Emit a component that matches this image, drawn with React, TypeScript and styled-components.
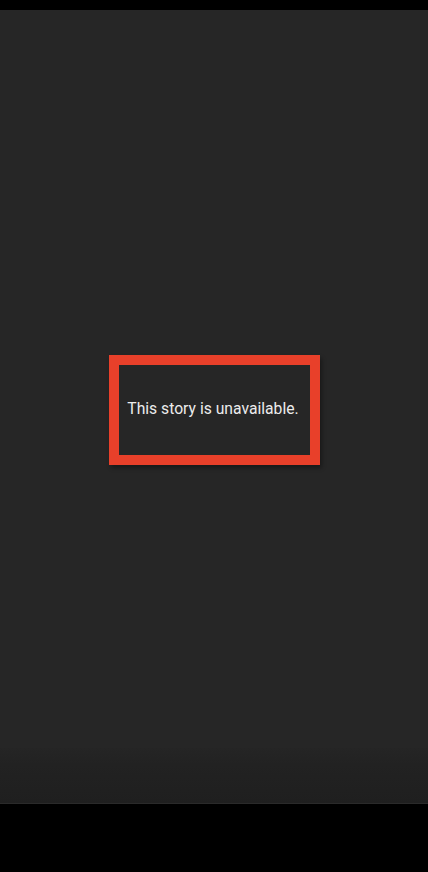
import React from "react";
import styled, { createGlobalStyle } from "styled-components";

const Global = createGlobalStyle`
  html, body { margin: 0; padding: 0; background: #000; }
  body { font-family: Roboto, "Noto Sans", sans-serif; }
`;

const Screen = styled.div`
  width: 428px;
  height: 872px;
  display: flex;
  flex-direction: column;
  background: #000;
`;

const StatusBar = styled.div`
  height: 10px;
  flex: none;
  background: #000;
`;

const Stage = styled.main`
  flex: 1;
  display: flex;
  flex-direction: column;
  background: #262626;
`;

const Center = styled.div`
  flex: 1;
  display: flex;
  align-items: center;
  justify-content: center;
  padding-top: 62px;
`;

const Shade = styled.div`
  height: 55px;
  flex: none;
  background: linear-gradient(to bottom, #252525 0%, #222 30%, #1f1f1f 100%);
  border-bottom: 1px solid #2a2a2a;
`;

const NavArea = styled.div`
  height: 68px;
  flex: none;
  background: #000;
`;

const Notice = styled.div`
  box-sizing: border-box;
  width: 211px;
  height: 110px;
  border: 10px solid #e8402a;
  display: flex;
  align-items: center;
  justify-content: center;
  box-shadow: 2px 3px 4px rgba(0, 0, 0, 0.35);
`;

const Message = styled.p`
  margin: 0;
  color: #ececec;
  font-size: 15.7px;
  font-family: Roboto, "Noto Sans", sans-serif;
  white-space: nowrap;
  transform: translate(-1px, -2px);
`;

export default function App() {
  return (
    <>
      <Global />
      <Screen>
        <StatusBar />
        <Stage>
          <Center>
            <Notice>
              <Message>This story is unavailable.</Message>
            </Notice>
          </Center>
          <Shade />
        </Stage>
        <NavArea />
      </Screen>
    </>
  );
}
